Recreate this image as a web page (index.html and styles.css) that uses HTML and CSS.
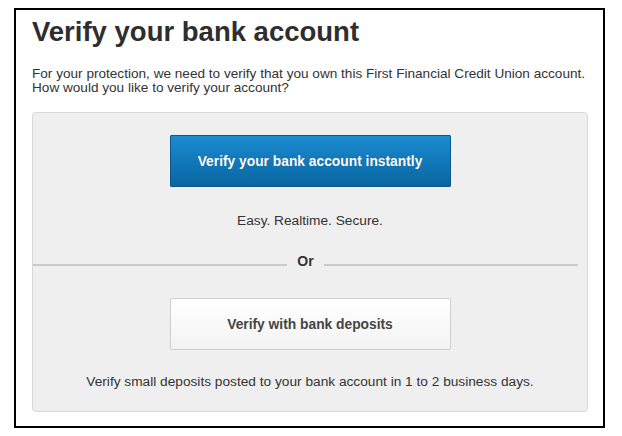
FILE: index.html
```html
<!DOCTYPE html>
<html>
<head>
<meta charset="utf-8">
<link rel="stylesheet" href="styles.css">
</head>
<body>
<div class="frame">
  <h1 class="title">Verify your bank account</h1>
  <p class="intro">For your protection, we need to verify that you own this First Financial Credit Union account.<br>How would you like to verify your account?</p>
  <div class="panel">
    <button class="btn btn-primary">Verify your bank account instantly</button>
    <p class="note note-top">Easy. Realtime. Secure.</p>
    <div class="divider"><span class="line line-left"></span><span class="or">Or</span><span class="line line-right"></span></div>
    <button class="btn btn-secondary">Verify with bank deposits</button>
    <p class="note note-bottom">Verify small deposits posted to your bank account in 1 to 2 business days.</p>
  </div>
</div>
</body>
</html>
```
FILE: styles.css
```css
* { box-sizing: border-box; }
html, body { margin: 0; padding: 0; background: #fff; }
body { font-family: "Liberation Sans", Arial, sans-serif; color: #333; }
.frame {
  margin: 8px 0 0 14px;
  width: 591px;
  height: 420px;
  border: 2px solid #000;
  padding: 0 16px;
}
.title {
  margin: 0;
  padding-top: 6px;
  font-size: 27.5px;
  line-height: 32px;
  font-weight: bold;
  color: #2e2e2e;
}
.intro {
  margin: 19px 0 0;
  font-size: 13.6px;
  line-height: 14px;
  color: #333;
}
.panel {
  margin-top: 17px;
  width: 556px;
  height: 300px;
  background: #efefef;
  border: 1px solid #d8d8d8;
  border-radius: 4px;
  display: flex;
  flex-direction: column;
  align-items: center;
  padding-top: 22px;
}
.btn {
  width: 281px;
  height: 52px;
  padding: 0;
  font-family: "Liberation Sans", Arial, sans-serif;
  font-size: 13.8px;
  font-weight: bold;
  cursor: pointer;
  flex: none;
}
.btn-primary {
  color: #fff;
  background: linear-gradient(#1b8bd0, #0966a2);
  border: 1px solid #0d5889;
  border-radius: 1px;
  text-shadow: 0 0 1px rgba(0,0,0,0.3);
}
.btn-secondary {
  color: #444;
  background: linear-gradient(#ffffff, #f3f3f3);
  border: 1px solid #cfcfcf;
  border-radius: 2px;
}
.note {
  margin: 0;
  font-size: 13.7px;
  line-height: 16px;
  color: #333;
}
.note-top { margin-top: 26px; }
.divider {
  align-self: stretch;
  display: flex;
  align-items: center;
  height: 16px;
  margin-top: 24px;
  margin-right: 9px;
}
.line {
  flex: 1;
  height: 2px;
  background: #cacaca;
  margin-top: 8px;
}
.or {
  padding: 0 10px;
  font-size: 14px;
  font-weight: bold;
  color: #333;
  line-height: 16px;
}
.divider + .btn { margin-top: 29px; }
.note-bottom { margin-top: 24px; }
```
